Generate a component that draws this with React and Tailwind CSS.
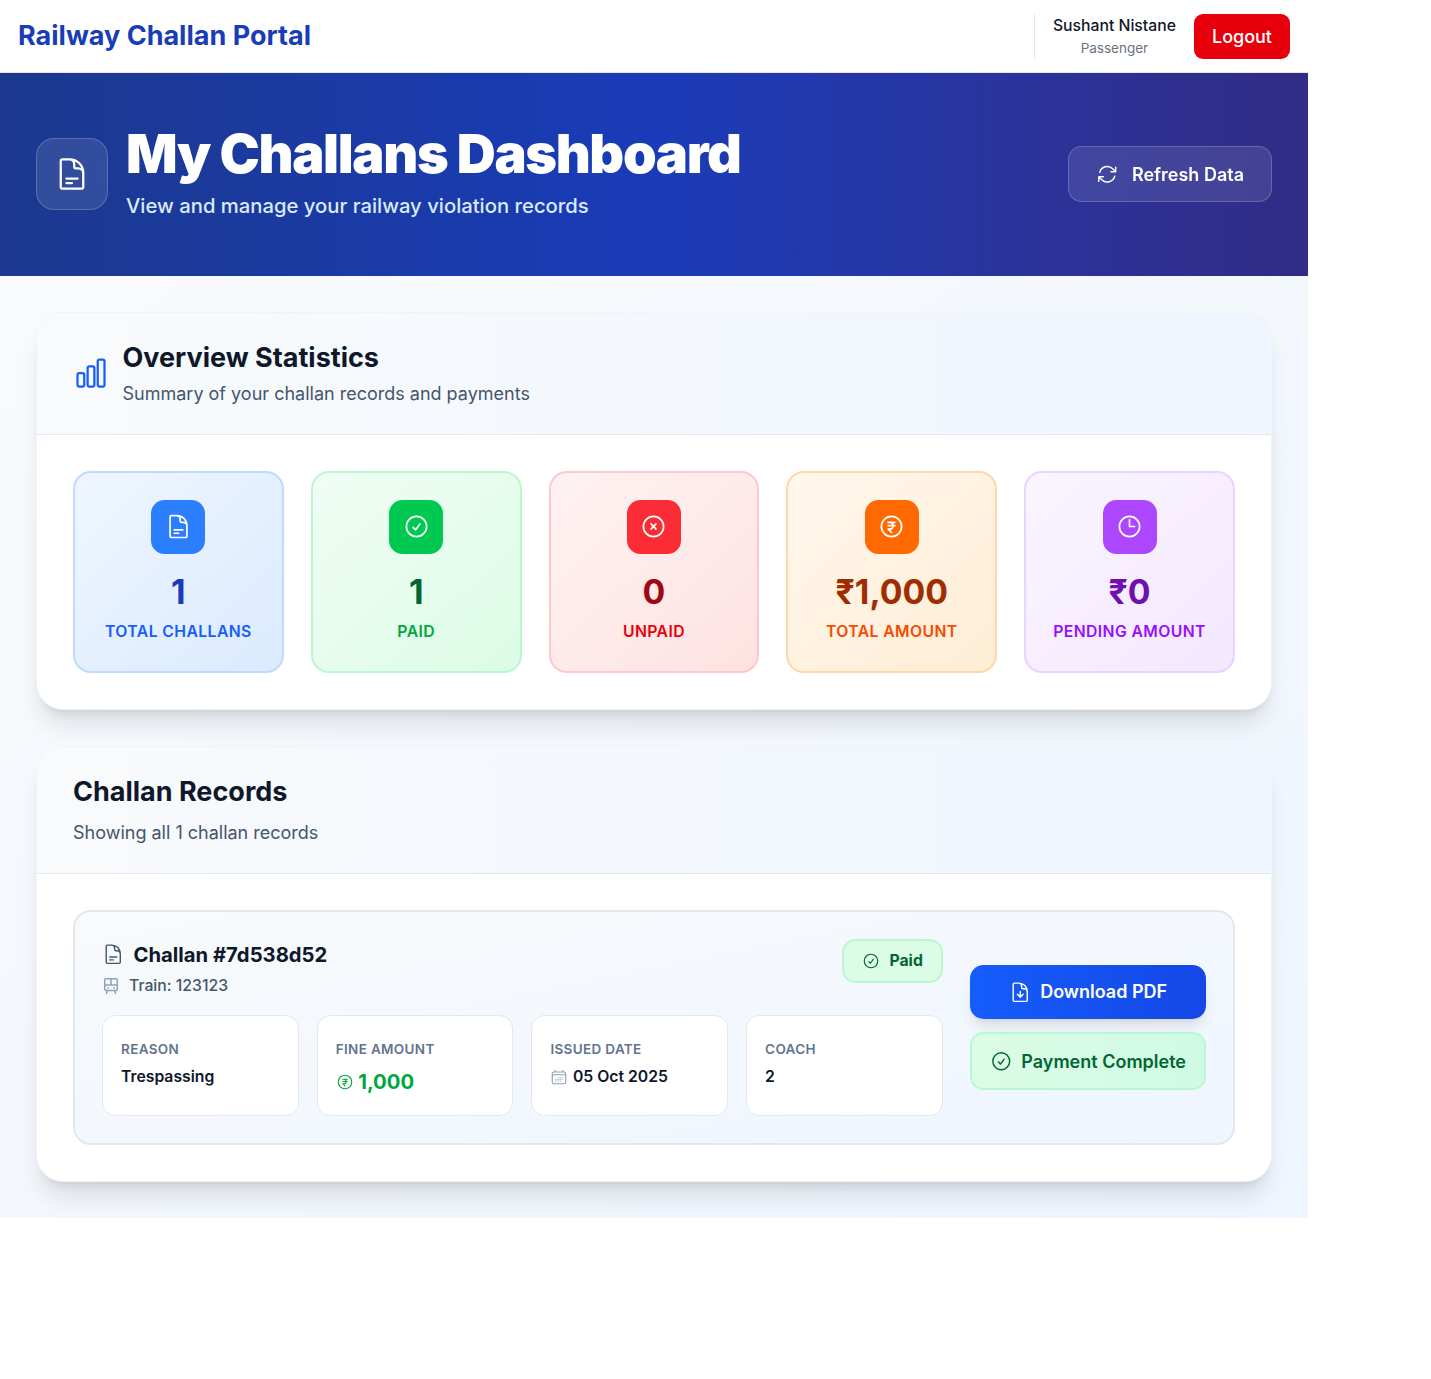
import {
  HiOutlineArrowPath,
  HiOutlineCalendarDays,
  HiOutlineChartBar,
  HiOutlineCheckCircle,
  HiOutlineClock,
  HiOutlineCurrencyRupee,
  HiOutlineDocumentArrowDown,
  HiOutlineDocumentText,
  HiOutlineXCircle,
} from "react-icons/hi2";

const stats = [
  {
    label: "Total Challans",
    value: "1",
    Icon: HiOutlineDocumentText,
    card: "from-blue-50 to-blue-100 border-blue-200",
    badge: "bg-blue-500",
    number: "text-blue-800",
    caption: "text-blue-600",
  },
  {
    label: "Paid",
    value: "1",
    Icon: HiOutlineCheckCircle,
    card: "from-green-50 to-green-100 border-green-200",
    badge: "bg-green-500",
    number: "text-green-800",
    caption: "text-green-600",
  },
  {
    label: "Unpaid",
    value: "0",
    Icon: HiOutlineXCircle,
    card: "from-red-50 to-red-100 border-red-200",
    badge: "bg-red-500",
    number: "text-red-800",
    caption: "text-red-600",
  },
  {
    label: "Total Amount",
    value: "₹1,000",
    Icon: HiOutlineCurrencyRupee,
    card: "from-orange-50 to-orange-100 border-orange-200",
    badge: "bg-orange-500",
    number: "text-orange-800",
    caption: "text-orange-600",
  },
  {
    label: "Pending Amount",
    value: "₹0",
    Icon: HiOutlineClock,
    card: "from-purple-50 to-purple-100 border-purple-200",
    badge: "bg-purple-500",
    number: "text-purple-800",
    caption: "text-purple-600",
  },
];

function TrainIcon({ className }) {
  return (
    <svg
      viewBox="0 0 24 24"
      fill="none"
      stroke="currentColor"
      strokeWidth="2"
      strokeLinecap="round"
      strokeLinejoin="round"
      className={className}
    >
      <rect x="3.600" y="2.400" width="16.800" height="15.600" rx="2" />
      <path d="M3.600 10.700h16.800M12 2.400v8.300M7.500 14.600h.7M15.800 14.600h.7M7 18.500l-1 3.500M17 18.500l1 3.500" />
    </svg>
  );
}

function TopBar() {
  return (
    <header className="flex items-center justify-between border-b border-gray-200 bg-white px-4.5 py-[13.5px]">
      <div className="text-[27px] leading-9 font-bold text-blue-800">Railway Challan Portal</div>
      <div className="flex items-center gap-4.5">
        <div className="flex h-[45px] flex-col items-center border-l border-gray-200 pt-px pl-4.5">
          <span className="text-[15.75px] leading-[22.5px] font-medium text-gray-900">Sushant Nistane</span>
          <span className="text-[13.5px] leading-[22.5px] text-gray-500">Passenger</span>
        </div>
        <button className="rounded-[9px] bg-red-600 px-4.5 py-2.25 text-[18px] leading-[27px] font-medium text-white">
          Logout
        </button>
      </div>
    </header>
  );
}

function Hero() {
  return (
    <section className="flex items-center justify-between bg-linear-to-r from-blue-900 via-blue-800 to-indigo-900 px-9 py-[54px] text-white">
      <div className="flex items-center gap-4.5">
        <div className="rounded-[18px] border border-white/20 bg-white/10 p-[17px] backdrop-blur-sm">
          <HiOutlineDocumentText className="size-9" />
        </div>
        <div>
          <h1 className="text-[54px] leading-[54px] font-black tracking-tight">My Challans Dashboard</h1>
          <p className="mt-2.25 text-[20.25px] leading-[31.5px] font-medium text-blue-100">
            View and manage your railway violation records
          </p>
        </div>
      </div>
      <button className="flex items-center gap-[13.5px] rounded-[13.5px] border border-white/20 bg-white/10 px-[27px] py-[13.5px] text-[18px] leading-[27px] font-semibold backdrop-blur-sm">
        <HiOutlineArrowPath className="size-[22.5px]" />
        Refresh Data
      </button>
    </section>
  );
}

function Panel({ header, children }) {
  return (
    <section className="overflow-hidden rounded-[27px] border border-slate-200/50 bg-white shadow-xl">
      <div className="border-b border-slate-200 bg-linear-to-r from-slate-50 to-blue-50 px-9 py-[27px]">{header}</div>
      <div className="p-9">{children}</div>
    </section>
  );
}

function StatCard({ label, value, Icon, card, badge, number, caption }) {
  return (
    <div className={`flex flex-col items-center rounded-[18px] border-2 bg-linear-to-br py-[27px] ${card}`}>
      <div className={`flex size-[54px] items-center justify-center rounded-[13.5px] ${badge}`}>
        <Icon className="size-[27px] text-white" />
      </div>
      <div className={`mt-4.5 text-[33.75px] leading-[40.5px] font-bold ${number}`}>{value}</div>
      <div
        className={`mt-2.25 text-[15.75px] leading-[22.5px] font-semibold tracking-wide whitespace-nowrap uppercase ${caption}`}
      >
        {label}
      </div>
    </div>
  );
}

function Detail({ label, children }) {
  return (
    <div className="rounded-[13.5px] border border-slate-200 bg-white p-4.5 text-[18px] leading-[27px]">
      <div className="h-[27px]">
        <span className="text-[13.5px] font-semibold tracking-wide text-slate-500 uppercase">{label}</span>
      </div>
      <div className="mt-[4.5px] flex items-center text-[15.75px] leading-[22.5px] font-semibold text-slate-900">
        {children}
      </div>
    </div>
  );
}

function ChallanRecord() {
  return (
    <article className="flex items-center gap-[27px] rounded-[18px] border-2 border-slate-200 bg-linear-to-br from-slate-50 to-blue-50 p-[27px]">
      <div className="flex-1">
        <div className="flex items-start justify-between">
          <div>
            <h3 className="flex items-center gap-2.25 text-[20.25px] leading-[31.5px] font-bold text-slate-900">
              <HiOutlineDocumentText className="size-[22.5px] text-slate-600" />
              Challan #7d538d52
            </h3>
            <p className="mt-[4.5px] flex items-center gap-2.25 text-[15.75px] leading-[22.5px] font-medium text-slate-600">
              <TrainIcon className="size-4.5 text-slate-400" />
              Train: 123123
            </p>
          </div>
          <span className="flex items-center gap-2.25 rounded-[13.5px] border-2 border-green-200 bg-green-100 px-4.5 py-2.25 text-[15.75px] leading-[22.5px] font-bold text-green-800">
            <HiOutlineCheckCircle className="size-4.5" />
            Paid
          </span>
        </div>
        <div className="mt-4.5 grid grid-cols-4 gap-4.5">
          <Detail label="Reason">Trespassing</Detail>
          <Detail label="Fine Amount">
            <span className="flex items-center gap-[4.5px] text-[20.25px] leading-[31.5px] font-bold text-green-600">
              <HiOutlineCurrencyRupee className="size-4.5" />
              1,000
            </span>
          </Detail>
          <Detail label="Issued Date">
            <HiOutlineCalendarDays className="mr-[4.5px] size-4.5 text-slate-400" />
            05 Oct 2025
          </Detail>
          <Detail label="Coach">2</Detail>
        </div>
      </div>
      <div className="flex flex-col gap-[13.5px] text-[18px] leading-[27px] font-semibold">
        <button className="flex items-center justify-center gap-2.25 rounded-[13.5px] bg-linear-to-r from-blue-600 to-blue-700 py-[13.5px] text-white shadow-lg">
          <HiOutlineDocumentArrowDown className="size-[22.5px]" />
          Download PDF
        </button>
        <div className="flex items-center justify-center gap-2.25 rounded-[13.5px] border-2 border-green-200 bg-linear-to-r from-green-100 to-emerald-100 px-4.5 py-[13.5px] text-green-800">
          <HiOutlineCheckCircle className="size-[22.5px]" />
          Payment Complete
        </div>
      </div>
    </article>
  );
}

export default function App() {
  return (
    <div className="min-h-screen bg-white font-['Inter',sans-serif]">
      <div className="w-[1308px]">
        <TopBar />
        <Hero />
        <main className="flex flex-col gap-9 bg-linear-to-br from-slate-50 to-blue-50 p-9">
          <Panel
            header={
              <div className="flex items-center gap-[13.5px]">
                <HiOutlineChartBar className="size-9 text-blue-600" />
                <div>
                  <h2 className="text-[27px] leading-9 font-bold text-slate-900">Overview Statistics</h2>
                  <p className="mt-[4.5px] mb-[-0.1px] text-[18px] leading-[27px] text-slate-600">
                    Summary of your challan records and payments
                  </p>
                </div>
              </div>
            }
          >
            <div className="grid grid-cols-5 gap-[27px]">
              {stats.map((stat) => (
                <StatCard key={stat.label} {...stat} />
              ))}
            </div>
          </Panel>
          <Panel
            header={
              <>
                <h2 className="text-[27px] leading-9 font-bold text-slate-900">Challan Records</h2>
                <p className="mt-2.25 text-[18px] leading-[27px] text-slate-600">Showing all 1 challan records</p>
              </>
            }
          >
            <ChallanRecord />
          </Panel>
        </main>
      </div>
    </div>
  );
}
